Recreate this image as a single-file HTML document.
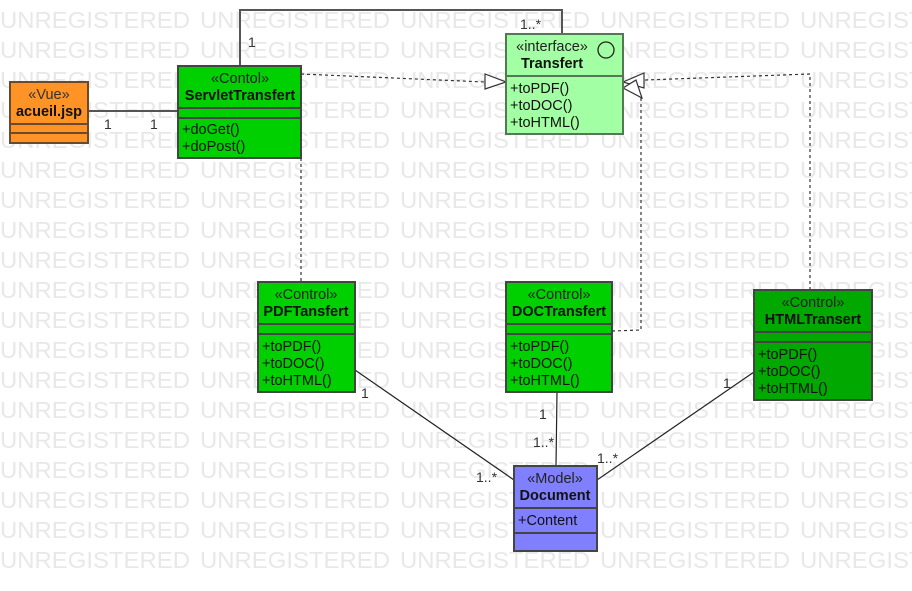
<!DOCTYPE html>
<html><head><meta charset="utf-8"><style>html,body{margin:0;padding:0;background:#fff;width:912px;height:591px;overflow:hidden}</style></head>
<body>
<svg width="912" height="591" xmlns="http://www.w3.org/2000/svg" font-family="Liberation Sans, sans-serif">
<g fill="#e8e8e8" font-size="23">
<text x="0" y="28" textLength="190" lengthAdjust="spacingAndGlyphs">UNREGISTERED</text><text x="200" y="28" textLength="190" lengthAdjust="spacingAndGlyphs">UNREGISTERED</text><text x="400" y="28" textLength="190" lengthAdjust="spacingAndGlyphs">UNREGISTERED</text><text x="600" y="28" textLength="190" lengthAdjust="spacingAndGlyphs">UNREGISTERED</text><text x="800" y="28" textLength="190" lengthAdjust="spacingAndGlyphs">UNREGISTERED</text>
<text x="0" y="58" textLength="190" lengthAdjust="spacingAndGlyphs">UNREGISTERED</text><text x="200" y="58" textLength="190" lengthAdjust="spacingAndGlyphs">UNREGISTERED</text><text x="400" y="58" textLength="190" lengthAdjust="spacingAndGlyphs">UNREGISTERED</text><text x="600" y="58" textLength="190" lengthAdjust="spacingAndGlyphs">UNREGISTERED</text><text x="800" y="58" textLength="190" lengthAdjust="spacingAndGlyphs">UNREGISTERED</text>
<text x="0" y="88" textLength="190" lengthAdjust="spacingAndGlyphs">UNREGISTERED</text><text x="200" y="88" textLength="190" lengthAdjust="spacingAndGlyphs">UNREGISTERED</text><text x="400" y="88" textLength="190" lengthAdjust="spacingAndGlyphs">UNREGISTERED</text><text x="600" y="88" textLength="190" lengthAdjust="spacingAndGlyphs">UNREGISTERED</text><text x="800" y="88" textLength="190" lengthAdjust="spacingAndGlyphs">UNREGISTERED</text>
<text x="0" y="118" textLength="190" lengthAdjust="spacingAndGlyphs">UNREGISTERED</text><text x="200" y="118" textLength="190" lengthAdjust="spacingAndGlyphs">UNREGISTERED</text><text x="400" y="118" textLength="190" lengthAdjust="spacingAndGlyphs">UNREGISTERED</text><text x="600" y="118" textLength="190" lengthAdjust="spacingAndGlyphs">UNREGISTERED</text><text x="800" y="118" textLength="190" lengthAdjust="spacingAndGlyphs">UNREGISTERED</text>
<text x="0" y="148" textLength="190" lengthAdjust="spacingAndGlyphs">UNREGISTERED</text><text x="200" y="148" textLength="190" lengthAdjust="spacingAndGlyphs">UNREGISTERED</text><text x="400" y="148" textLength="190" lengthAdjust="spacingAndGlyphs">UNREGISTERED</text><text x="600" y="148" textLength="190" lengthAdjust="spacingAndGlyphs">UNREGISTERED</text><text x="800" y="148" textLength="190" lengthAdjust="spacingAndGlyphs">UNREGISTERED</text>
<text x="0" y="178" textLength="190" lengthAdjust="spacingAndGlyphs">UNREGISTERED</text><text x="200" y="178" textLength="190" lengthAdjust="spacingAndGlyphs">UNREGISTERED</text><text x="400" y="178" textLength="190" lengthAdjust="spacingAndGlyphs">UNREGISTERED</text><text x="600" y="178" textLength="190" lengthAdjust="spacingAndGlyphs">UNREGISTERED</text><text x="800" y="178" textLength="190" lengthAdjust="spacingAndGlyphs">UNREGISTERED</text>
<text x="0" y="208" textLength="190" lengthAdjust="spacingAndGlyphs">UNREGISTERED</text><text x="200" y="208" textLength="190" lengthAdjust="spacingAndGlyphs">UNREGISTERED</text><text x="400" y="208" textLength="190" lengthAdjust="spacingAndGlyphs">UNREGISTERED</text><text x="600" y="208" textLength="190" lengthAdjust="spacingAndGlyphs">UNREGISTERED</text><text x="800" y="208" textLength="190" lengthAdjust="spacingAndGlyphs">UNREGISTERED</text>
<text x="0" y="238" textLength="190" lengthAdjust="spacingAndGlyphs">UNREGISTERED</text><text x="200" y="238" textLength="190" lengthAdjust="spacingAndGlyphs">UNREGISTERED</text><text x="400" y="238" textLength="190" lengthAdjust="spacingAndGlyphs">UNREGISTERED</text><text x="600" y="238" textLength="190" lengthAdjust="spacingAndGlyphs">UNREGISTERED</text><text x="800" y="238" textLength="190" lengthAdjust="spacingAndGlyphs">UNREGISTERED</text>
<text x="0" y="268" textLength="190" lengthAdjust="spacingAndGlyphs">UNREGISTERED</text><text x="200" y="268" textLength="190" lengthAdjust="spacingAndGlyphs">UNREGISTERED</text><text x="400" y="268" textLength="190" lengthAdjust="spacingAndGlyphs">UNREGISTERED</text><text x="600" y="268" textLength="190" lengthAdjust="spacingAndGlyphs">UNREGISTERED</text><text x="800" y="268" textLength="190" lengthAdjust="spacingAndGlyphs">UNREGISTERED</text>
<text x="0" y="298" textLength="190" lengthAdjust="spacingAndGlyphs">UNREGISTERED</text><text x="200" y="298" textLength="190" lengthAdjust="spacingAndGlyphs">UNREGISTERED</text><text x="400" y="298" textLength="190" lengthAdjust="spacingAndGlyphs">UNREGISTERED</text><text x="600" y="298" textLength="190" lengthAdjust="spacingAndGlyphs">UNREGISTERED</text><text x="800" y="298" textLength="190" lengthAdjust="spacingAndGlyphs">UNREGISTERED</text>
<text x="0" y="328" textLength="190" lengthAdjust="spacingAndGlyphs">UNREGISTERED</text><text x="200" y="328" textLength="190" lengthAdjust="spacingAndGlyphs">UNREGISTERED</text><text x="400" y="328" textLength="190" lengthAdjust="spacingAndGlyphs">UNREGISTERED</text><text x="600" y="328" textLength="190" lengthAdjust="spacingAndGlyphs">UNREGISTERED</text><text x="800" y="328" textLength="190" lengthAdjust="spacingAndGlyphs">UNREGISTERED</text>
<text x="0" y="358" textLength="190" lengthAdjust="spacingAndGlyphs">UNREGISTERED</text><text x="200" y="358" textLength="190" lengthAdjust="spacingAndGlyphs">UNREGISTERED</text><text x="400" y="358" textLength="190" lengthAdjust="spacingAndGlyphs">UNREGISTERED</text><text x="600" y="358" textLength="190" lengthAdjust="spacingAndGlyphs">UNREGISTERED</text><text x="800" y="358" textLength="190" lengthAdjust="spacingAndGlyphs">UNREGISTERED</text>
<text x="0" y="388" textLength="190" lengthAdjust="spacingAndGlyphs">UNREGISTERED</text><text x="200" y="388" textLength="190" lengthAdjust="spacingAndGlyphs">UNREGISTERED</text><text x="400" y="388" textLength="190" lengthAdjust="spacingAndGlyphs">UNREGISTERED</text><text x="600" y="388" textLength="190" lengthAdjust="spacingAndGlyphs">UNREGISTERED</text><text x="800" y="388" textLength="190" lengthAdjust="spacingAndGlyphs">UNREGISTERED</text>
<text x="0" y="418" textLength="190" lengthAdjust="spacingAndGlyphs">UNREGISTERED</text><text x="200" y="418" textLength="190" lengthAdjust="spacingAndGlyphs">UNREGISTERED</text><text x="400" y="418" textLength="190" lengthAdjust="spacingAndGlyphs">UNREGISTERED</text><text x="600" y="418" textLength="190" lengthAdjust="spacingAndGlyphs">UNREGISTERED</text><text x="800" y="418" textLength="190" lengthAdjust="spacingAndGlyphs">UNREGISTERED</text>
<text x="0" y="448" textLength="190" lengthAdjust="spacingAndGlyphs">UNREGISTERED</text><text x="200" y="448" textLength="190" lengthAdjust="spacingAndGlyphs">UNREGISTERED</text><text x="400" y="448" textLength="190" lengthAdjust="spacingAndGlyphs">UNREGISTERED</text><text x="600" y="448" textLength="190" lengthAdjust="spacingAndGlyphs">UNREGISTERED</text><text x="800" y="448" textLength="190" lengthAdjust="spacingAndGlyphs">UNREGISTERED</text>
<text x="0" y="478" textLength="190" lengthAdjust="spacingAndGlyphs">UNREGISTERED</text><text x="200" y="478" textLength="190" lengthAdjust="spacingAndGlyphs">UNREGISTERED</text><text x="400" y="478" textLength="190" lengthAdjust="spacingAndGlyphs">UNREGISTERED</text><text x="600" y="478" textLength="190" lengthAdjust="spacingAndGlyphs">UNREGISTERED</text><text x="800" y="478" textLength="190" lengthAdjust="spacingAndGlyphs">UNREGISTERED</text>
<text x="0" y="508" textLength="190" lengthAdjust="spacingAndGlyphs">UNREGISTERED</text><text x="200" y="508" textLength="190" lengthAdjust="spacingAndGlyphs">UNREGISTERED</text><text x="400" y="508" textLength="190" lengthAdjust="spacingAndGlyphs">UNREGISTERED</text><text x="600" y="508" textLength="190" lengthAdjust="spacingAndGlyphs">UNREGISTERED</text><text x="800" y="508" textLength="190" lengthAdjust="spacingAndGlyphs">UNREGISTERED</text>
<text x="0" y="538" textLength="190" lengthAdjust="spacingAndGlyphs">UNREGISTERED</text><text x="200" y="538" textLength="190" lengthAdjust="spacingAndGlyphs">UNREGISTERED</text><text x="400" y="538" textLength="190" lengthAdjust="spacingAndGlyphs">UNREGISTERED</text><text x="600" y="538" textLength="190" lengthAdjust="spacingAndGlyphs">UNREGISTERED</text><text x="800" y="538" textLength="190" lengthAdjust="spacingAndGlyphs">UNREGISTERED</text>
<text x="0" y="568" textLength="190" lengthAdjust="spacingAndGlyphs">UNREGISTERED</text><text x="200" y="568" textLength="190" lengthAdjust="spacingAndGlyphs">UNREGISTERED</text><text x="400" y="568" textLength="190" lengthAdjust="spacingAndGlyphs">UNREGISTERED</text><text x="600" y="568" textLength="190" lengthAdjust="spacingAndGlyphs">UNREGISTERED</text><text x="800" y="568" textLength="190" lengthAdjust="spacingAndGlyphs">UNREGISTERED</text>
</g>

<g fill="none" stroke="#555" stroke-width="2">
<polyline points="240,66 240,10 562,10 562,34"/>
<line x1="88" y1="111" x2="178" y2="111"/>
</g>
<g fill="none" stroke="#222" stroke-width="1.2">
<line x1="355" y1="370" x2="514" y2="480"/>
<line x1="557" y1="392" x2="556" y2="466"/>
<line x1="754" y1="372" x2="597" y2="480"/>
</g>
<g fill="none" stroke="#333" stroke-width="1.2" stroke-dasharray="3,3">
<line x1="301" y1="74" x2="485" y2="82"/>
<line x1="301" y1="158" x2="301" y2="282"/>
<polyline points="612,331 641,330 641,98"/>
<polyline points="810,290 810,74 645,80"/>
</g>
<g fill="#fff" stroke="#333" stroke-width="1.2">
<polygon points="485,74 485,89 506,82"/>
<polygon points="623,82 644,73 644,88"/>
<polygon points="623,88 642,98 636,80"/>
</g>
<g font-size="14" fill="#333">
<text x="248" y="47">1</text>
<text x="520" y="29">1..*</text>
<text x="104" y="129">1</text>
<text x="150" y="129">1</text>
<text x="361" y="398">1</text>
<text x="539" y="419">1</text>
<text x="533" y="447">1..*</text>
<text x="476" y="482">1..*</text>
<text x="597" y="463">1..*</text>
<text x="723" y="388">1</text>
</g>

<g stroke="#444" stroke-width="2" fill="#111">
<rect x="10" y="82" width="78" height="61" fill="#ff9326" stroke="#6b4a2b"/>
<line x1="10" y1="124" x2="88" y2="124" stroke="#6b4a2b"/>
<line x1="10" y1="133" x2="88" y2="133" stroke="#6b4a2b"/>
<rect x="178" y="66" width="123" height="92" fill="#00d000"/>
<line x1="178" y1="108" x2="301" y2="108"/><line x1="178" y1="118" x2="301" y2="118"/>
<rect x="506" y="34" width="117" height="100" fill="#a3ffa3" stroke="#557755"/>
<line x1="506" y1="76" x2="623" y2="76" stroke="#557755"/>
<circle cx="606" cy="50" r="8" fill="none" stroke="#222" stroke-width="1.3"/>
<rect x="258" y="282" width="97" height="110" fill="#00d000"/>
<line x1="258" y1="324" x2="355" y2="324"/><line x1="258" y1="334" x2="355" y2="334"/>
<rect x="506" y="282" width="106" height="110" fill="#00d000"/>
<line x1="506" y1="324" x2="612" y2="324"/><line x1="506" y1="334" x2="612" y2="334"/>
<rect x="754" y="290" width="118" height="110" fill="#00a800"/>
<line x1="754" y1="332" x2="872" y2="332"/><line x1="754" y1="342" x2="872" y2="342"/>
<rect x="514" y="466" width="83" height="85" fill="#8080ff"/>
<line x1="514" y1="508" x2="597" y2="508"/><line x1="514" y1="533" x2="597" y2="533"/>
</g>

<g font-size="14.5" fill="#111" stroke="none">
<text x="49" y="99" text-anchor="middle" fill="#333">«Vue»</text>
<text x="49" y="116" text-anchor="middle" font-weight="bold">acueil.jsp</text>
<text x="240" y="83" text-anchor="middle" fill="#222">«Contol»</text>
<text x="240" y="100" text-anchor="middle" font-weight="bold">ServletTransfert</text>
<text x="182" y="134">+doGet()</text>
<text x="182" y="151">+doPost()</text>
<text x="552" y="51" text-anchor="middle" fill="#222">«interface»</text>
<text x="552" y="68" text-anchor="middle" font-weight="bold">Transfert</text>
<text x="510" y="93">+toPDF()</text>
<text x="510" y="110">+toDOC()</text>
<text x="510" y="127">+toHTML()</text>
<text x="306" y="299" text-anchor="middle" fill="#222">«Control»</text>
<text x="306" y="316" text-anchor="middle" font-weight="bold">PDFTansfert</text>
<text x="262" y="351">+toPDF()</text>
<text x="262" y="368">+toDOC()</text>
<text x="262" y="385">+toHTML()</text>
<text x="559" y="299" text-anchor="middle" fill="#222">«Control»</text>
<text x="559" y="316" text-anchor="middle" font-weight="bold">DOCTransfert</text>
<text x="510" y="351">+toPDF()</text>
<text x="510" y="368">+toDOC()</text>
<text x="510" y="385">+toHTML()</text>
<text x="813" y="307" text-anchor="middle" fill="#222">«Control»</text>
<text x="813" y="324" text-anchor="middle" font-weight="bold">HTMLTransert</text>
<text x="758" y="359">+toPDF()</text>
<text x="758" y="376">+toDOC()</text>
<text x="758" y="393">+toHTML()</text>
<text x="555" y="483" text-anchor="middle" fill="#222">«Model»</text>
<text x="555" y="500" text-anchor="middle" font-weight="bold">Document</text>
<text x="518" y="525">+Content</text>
</g>
</svg>
</body></html>
